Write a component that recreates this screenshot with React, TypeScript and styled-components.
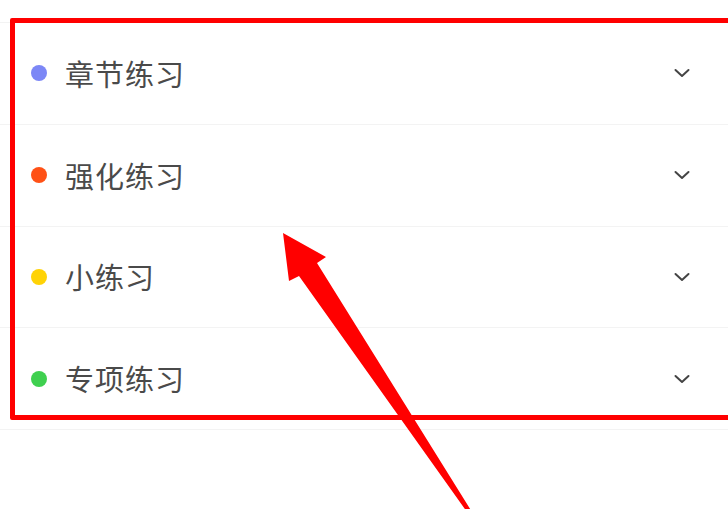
import React from 'react';
import styled, { createGlobalStyle } from 'styled-components';

const GlobalStyle = createGlobalStyle`
  html, body {
    margin: 0;
    padding: 0;
    background: #fff;
  }
  body {
    font-family: "Noto Sans CJK SC", "Noto Sans", sans-serif;
  }
`;

const Page = styled.div`
  position: relative;
  width: 728px;
  height: 509px;
  overflow: hidden;
  background: #fff;
  padding-top: 22px;
  box-sizing: border-box;
`;

const List = styled.div`
  display: flex;
  flex-direction: column;
  border-top: 1px solid #f3f3f3;
`;

const Row = styled.div`
  display: flex;
  align-items: center;
  box-sizing: border-box;
  height: 101.75px;
  padding: 0 38px 0 31px;
  border-bottom: 1px solid #f3f3f3;
`;

const Dot = styled.span<{ $color: string }>`
  width: 16px;
  height: 16px;
  border-radius: 50%;
  background: ${(p) => p.$color};
  flex-shrink: 0;
`;

const Label = styled.span`
  flex: 1;
  margin-left: 18px;
  font-size: 29px;
  letter-spacing: 1px;
  color: #4a4a4a;
  line-height: 1;
`;

const Chevron = styled.svg`
  width: 16px;
  height: 10px;
  flex-shrink: 0;
`;

const Highlight = styled.div`
  position: absolute;
  left: 10px;
  top: 18px;
  width: 730px;
  height: 402px;
  box-sizing: border-box;
  border: 5px solid #ff0000;
  border-radius: 2px;
  pointer-events: none;
`;

const Arrow = styled.svg`
  position: absolute;
  left: 0;
  top: 0;
  width: 728px;
  height: 509px;
  pointer-events: none;
`;

const items = [
  { name: '章节练习', color: '#7c87f6' },
  { name: '强化练习', color: '#ff5116' },
  { name: '小练习', color: '#ffd306' },
  { name: '专项练习', color: '#3fd04f' },
];

function App() {
  return (
    <>
      <GlobalStyle />
      <Page>
        <List>
          {items.map((item) => (
            <Row key={item.name}>
              <Dot $color={item.color} />
              <Label>{item.name}</Label>
              <Chevron viewBox="0 0 16 10">
                <path d="M1.5 2 L8 8 L14.5 2" fill="none" stroke="#444" strokeWidth="2" strokeLinecap="round" strokeLinejoin="round" />
              </Chevron>
            </Row>
          ))}
        </List>
        <Highlight />
        <Arrow viewBox="0 0 728 509">
          <polygon points="283,233 326,257 317,263 472,512 467,512 299,276 289,281" fill="#ff0000" />
        </Arrow>
      </Page>
    </>
  );
}

export default App;
